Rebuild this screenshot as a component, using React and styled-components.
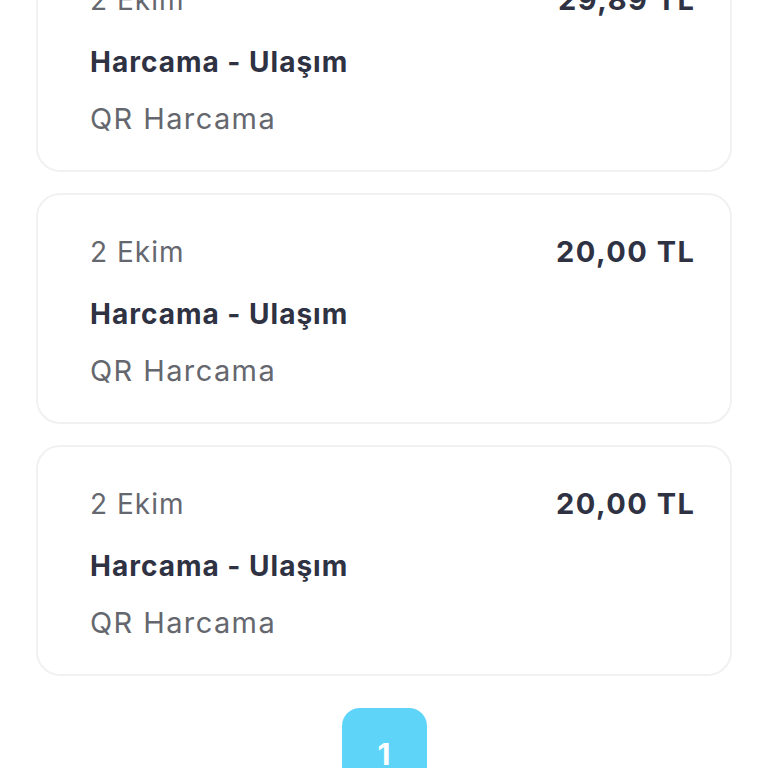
import React from 'react';
import styled, { createGlobalStyle } from 'styled-components';

const Global = createGlobalStyle`
  html, body {
    margin: 0;
    padding: 0;
    background: #ffffff;
    overflow: hidden;
  }
  body {
    font-family: "Inter", "Noto Sans", sans-serif;
  }
`;

const Page = styled.div`
  height: 768px;
  overflow: hidden;
  padding: 0 36px;
`;

const List = styled.div`
  display: flex;
  flex-direction: column;
  gap: 21px;
  margin-top: -59px;
`;

const Card = styled.div`
  box-sizing: border-box;
  height: 231px;
  border: 2px solid #f1f1f1;
  border-radius: 24px;
  background: #fff;
  padding: 38px 36px 0 52px;
`;

const TopRow = styled.div`
  display: flex;
  justify-content: space-between;
  align-items: center;
  height: 38px;
`;

const Date = styled.div`
  font-size: 28px;
  letter-spacing: 1px;
  color: #65676e;
  line-height: 38px;
`;

const Amount = styled.div`
  font-size: 29px;
  font-weight: 700;
  letter-spacing: 1.5px;
  margin-right: -1.5px;
  color: #2f3242;
  line-height: 40px;
`;

const Title = styled.div`
  margin-top: 24px;
  font-size: 28px;
  font-weight: 700;
  letter-spacing: 1px;
  color: #2f3242;
  line-height: 38px;
`;

const Sub = styled.div`
  margin-top: 19px;
  font-size: 29px;
  letter-spacing: 1.4px;
  color: #65676e;
  line-height: 38px;
`;

const Pager = styled.div`
  display: flex;
  justify-content: center;
  margin-top: 32px;
`;

const PageButton = styled.div`
  width: 85px;
  height: 85px;
  border-radius: 18px;
  background: ${p => (p.active ? '#5fd4f9' : '#f3f3f3')};
  color: #fff;
  font-size: 30px;
  font-weight: 700;
  display: flex;
  justify-content: center;
  padding-top: 28px;
  box-sizing: border-box;
`;

const items = [
  { date: '2 Ekim', amount: '29,89 TL', title: 'Harcama - Ulaşım', sub: 'QR Harcama' },
  { date: '2 Ekim', amount: '20,00 TL', title: 'Harcama - Ulaşım', sub: 'QR Harcama' },
  { date: '2 Ekim', amount: '20,00 TL', title: 'Harcama - Ulaşım', sub: 'QR Harcama' },
];

export default function App() {
  return (
    <>
      <Global />
      <Page>
        <List>
          {items.map((it, i) => (
            <Card key={i}>
              <TopRow>
                <Date>{it.date}</Date>
                <Amount>{it.amount}</Amount>
              </TopRow>
              <Title>{it.title}</Title>
              <Sub>{it.sub}</Sub>
            </Card>
          ))}
        </List>
        <Pager>
          <PageButton active>1</PageButton>
        </Pager>
      </Page>
    </>
  );
}
